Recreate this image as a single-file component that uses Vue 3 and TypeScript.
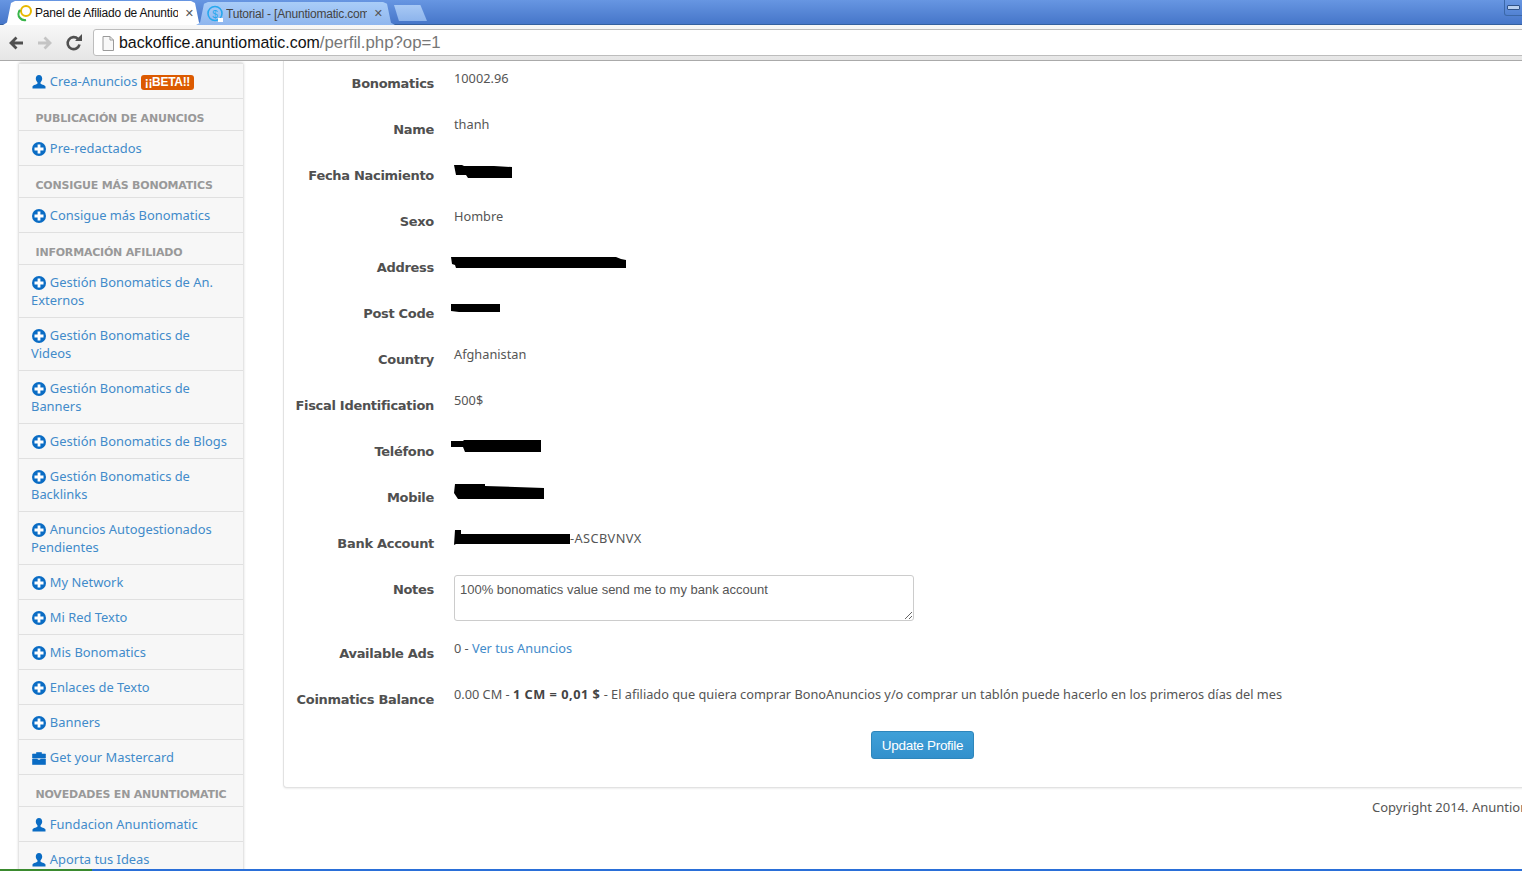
<script setup lang="ts">
type Item = { kind: 'head' | 'link' | 'user' | 'case'; text: string; badge?: boolean };
const items: Item[] = [
  { kind: 'user', text: 'Crea-Anuncios', badge: true },
  { kind: 'head', text: 'Publicación de anuncios' },
  { kind: 'link', text: 'Pre-redactados' },
  { kind: 'head', text: 'Consigue más Bonomatics' },
  { kind: 'link', text: 'Consigue más Bonomatics' },
  { kind: 'head', text: 'Información afiliado' },
  { kind: 'link', text: 'Gestión Bonomatics de An. Externos' },
  { kind: 'link', text: 'Gestión Bonomatics de Videos' },
  { kind: 'link', text: 'Gestión Bonomatics de Banners' },
  { kind: 'link', text: 'Gestión Bonomatics de Blogs' },
  { kind: 'link', text: 'Gestión Bonomatics de Backlinks' },
  { kind: 'link', text: 'Anuncios Autogestionados Pendientes' },
  { kind: 'link', text: 'My Network' },
  { kind: 'link', text: 'Mi Red Texto' },
  { kind: 'link', text: 'Mis Bonomatics' },
  { kind: 'link', text: 'Enlaces de Texto' },
  { kind: 'link', text: 'Banners' },
  { kind: 'case', text: 'Get your Mastercard' },
  { kind: 'head', text: 'Novedades en Anuntiomatic' },
  { kind: 'user', text: 'Fundacion Anuntiomatic' },
  { kind: 'user', text: 'Aporta tus Ideas' },
];
type Blot = { w: number; h: number; d: string; shift: number; top: number };
type Row = { label: string; value?: string; blot?: Blot; after?: string };
const rows: Row[] = [
  { label: 'Bonomatics', value: '10002.96' },
  { label: 'Name', value: 'thanh' },
  { label: 'Fecha Nacimiento', blot: { w: 58, h: 13, shift: 0, top: 5, d: 'M0 0h8l2 1 30 0 18 1v11H14l-2-3H2z' } },
  { label: 'Sexo', value: 'Hombre' },
  { label: 'Address', blot: { w: 175, h: 13, shift: -3, top: 5, d: 'M0 0h165l5 2 5 1v8H5l-1-3-3-1z' } },
  { label: 'Post Code', blot: { w: 49, h: 9, shift: -3, top: 6, d: 'M0 0h49v8H8l-8-1z' } },
  { label: 'Country', value: 'Afghanistan' },
  { label: 'Fiscal Identification', value: '500$' },
  { label: 'Teléfono', blot: { w: 90, h: 12, shift: -3, top: 4, d: 'M0 1h12l1-1h77v12H14l-2-5H0z' } },
  { label: 'Mobile', blot: { w: 90, h: 15, shift: 0, top: 2, d: 'M1 0h30v2l59 2v11H4l-4-6z' } },
  { label: 'Bank Account', blot: { w: 116, h: 15, shift: 0, top: 2, d: 'M1 0h6v4h109v10H2l-2 1z' }, after: '-ASCBVNVX' },
];
</script>

<template>
  <div class="screen">
    <header class="tabstrip">
      <div class="tab active">
        <svg class="favicon" viewBox="0 0 18 18" width="18" height="18">
          <circle cx="11" cy="7" r="5" fill="none" stroke="#e8b800" stroke-width="2" />
          <path d="M5 6a6 6 0 0 0 0 8 6 6 0 0 0 6 2" fill="none" stroke="#39b54a" stroke-width="2.2" />
        </svg>
        <span class="tab-title">Panel de Afiliado de Anuntiomatic</span>
        <span class="tab-x">✕</span>
      </div>
      <div class="tab other">
        <svg class="favicon" viewBox="0 0 18 18" width="18" height="18">
          <circle cx="9" cy="8.500" r="7" fill="none" stroke="#27a8ee" stroke-width="1.600" />
          <text x="9" y="12.500" text-anchor="middle" font-size="10" fill="#27a8ee" font-family="Liberation Sans, sans-serif">$</text>
          <rect x="12" y="13" width="5" height="4" fill="#fff" />
        </svg>
        <span class="tab-title">Tutorial - [Anuntiomatic.com]</span>
        <span class="tab-x">✕</span>
      </div>
      <div class="tab newtab"></div>
      <div class="minimize"><i></i></div>
    </header>

    <div class="toolbar">
      <svg class="nav" viewBox="0 0 18 18" width="18" height="18">
        <path d="M16 9H5M9.500 3.500 4 9l5.500 5.500" fill="none" stroke="#505050" stroke-width="2.800" />
      </svg>
      <svg class="nav" viewBox="0 0 18 18" width="18" height="18">
        <path d="M2 9h11M8.500 3.500 14 9l-5.500 5.500" fill="none" stroke="#c4c4c4" stroke-width="2.800" />
      </svg>
      <svg class="nav reload" viewBox="0 0 18 18" width="18" height="18">
        <path d="M14.500 10.500A6 6 0 1 1 13 5" fill="none" stroke="#505050" stroke-width="2.600" />
        <path d="M10 7h7V0z" fill="#505050" />
      </svg>
      <div class="omnibox">
        <svg viewBox="0 0 12 15" width="12" height="15" class="page-ico">
          <path d="M1 .5h7l3.500 3.500v10.500H1zM8 .5V4h3.500" fill="#f8f8f8" stroke="#9a9a9a" />
        </svg>
        <span class="url"><b>backoffice.anuntiomatic.com</b>/perfil.php?op=1</span>
      </div>
    </div>

    <div class="page">
      <aside class="sidebar">
        <template v-for="item in items" :key="item.kind + item.text">
          <div v-if="item.kind === 'head'" class="head">{{ item.text }}</div>
          <a v-else class="link">
            <svg v-if="item.kind === 'link'" class="ico" viewBox="0 0 14 14" width="14" height="14">
              <circle cx="7" cy="7" r="7" fill="#0a6cc4" />
              <path d="M7 2.500v9M2.500 7h9" stroke="#fff" stroke-width="2.800" />
            </svg>
            <svg v-else-if="item.kind === 'user'" class="ico" viewBox="0 0 14 14" width="14" height="14">
              <path d="M7 0c2 0 3.200 1.500 3.200 3.600 0 1.800-.8 3-1.700 3.800v1c0 .8 4.500 1.400 5 3.100V13.500H.5V11.500c.5-1.700 5-2.300 5-3.100v-1C4.600 6.600 3.800 5.400 3.800 3.600 3.800 1.500 5 0 7 0z" fill="#0a6cc4" />
            </svg>
            <svg v-else class="ico" viewBox="0 0 14 14" width="14" height="14">
              <path d="M4.500 3V1.500h5V3M.5 3h13v4h-13zM.5 8h5v1h3V8h5v5.500H.5z" fill="#0a6cc4" stroke="#0a6cc4" stroke-width=".6" />
            </svg>
            {{ item.text }}
            <span v-if="item.badge" class="badge">¡¡BETA!!</span>
          </a>
        </template>
      </aside>

      <main class="main">
        <section class="card">
          <div v-for="row in rows" :key="row.label" class="row">
            <label class="lbl">{{ row.label }}</label>
            <div class="val">
              <svg v-if="row.blot" class="blot" :width="row.blot.w" :height="row.blot.h" :viewBox="`0 0 ${row.blot.w} ${row.blot.h}`" :style="{ marginLeft: row.blot.shift + 'px', marginTop: row.blot.top + 'px' }">
                <path :d="row.blot.d" fill="#000" />
              </svg>
              <template v-else>{{ row.value }}</template><span v-if="row.after" class="after">{{ row.after }}</span>
            </div>
          </div>
          <div class="row notes">
            <label class="lbl">Notes</label>
            <textarea class="area" readonly>100% bonomatics value send me to my bank account</textarea>
          </div>
          <div class="row">
            <label class="lbl">Available Ads</label>
            <div class="val">0 - <a class="plain">Ver tus Anuncios</a></div>
          </div>
          <div class="row">
            <label class="lbl">Coinmatics Balance</label>
            <div class="val nowrap">0.00 CM - <b>1 CM = 0,01 $</b> - El afiliado que quiera comprar BonoAnuncios y/o comprar un tablón puede hacerlo en los primeros días del mes</div>
          </div>
          <div class="actions"><button class="btn" type="button">Update Profile</button></div>
        </section>
        <footer class="copy">Copyright 2014. Anuntiomatic.com</footer>
      </main>
    </div>
    <div class="taskbar"><i></i></div>
  </div>
</template>

<style>
html, body { margin: 0; background: #fff; overflow: hidden; }
</style>

<style scoped>
.screen {
  width: 1522px; height: 871px; overflow: hidden;
  display: flex; flex-direction: column;
  font-family: "Noto Sans", "Open Sans", sans-serif; font-size: 13px; color: #555;
}
.tabstrip {
  height: 25px; flex: none; display: flex; align-items: flex-end; padding-left: 3px;
  background: linear-gradient(#6796e2, #4676c9); border-bottom: 1px solid #34609f; box-sizing: border-box;
  position: relative;
}
.tab {
  height: 24px; display: flex; align-items: center; box-sizing: border-box;
  clip-path: polygon(0 100%, 4px 90%, 8px 8%, 12px 0, calc(100% - 12px) 0, calc(100% - 8px) 8%, calc(100% - 4px) 90%, 100% 100%);
  font-family: "Liberation Sans", sans-serif; font-size: 12px; margin-bottom: -1px;
}
.active { width: 200px; background: #fff; color: #111; padding: 0 9px 0 12px; }
.other { width: 199px; margin-left: -7px; background: linear-gradient(#a9cdf8, #8fb6ee); color: #444; padding: 0 12px 0 10px; height: 23px; }
.newtab { width: 33px; height: 16px; margin-left: -1px; margin-bottom: 3px; background: linear-gradient(#a8c9f5, #8db4ec); clip-path: polygon(0 0, 80% 0, 100% 100%, 15% 100%); }
.tab-title { flex: 1; min-width: 0; margin-left: 2px; white-space: nowrap; overflow: hidden; letter-spacing: -.2px; }
.tab-x { flex: none; margin-left: 7px; font-size: 11px; font-weight: 700; color: #555; font-family: "DejaVu Sans", sans-serif; }
.favicon { flex: none; }
.minimize {
  position: absolute; right: -1px; top: 0; width: 19px; height: 16px; box-sizing: border-box;
  border: 1px solid #3b68a8; border-top: 0; border-radius: 0 0 0 3px; display: flex; align-items: center; justify-content: center;
}
.minimize i { width: 11px; height: 3px; background: #b9d0f0; border: 1px solid #2f5288; border-radius: 1px; }
.toolbar {
  height: 36px; flex: none; box-sizing: border-box; display: flex; align-items: center; gap: 11px; padding: 0 0 0 7px;
  background: linear-gradient(#f7f7f7, #e6e6e6); border-bottom: 1px solid #aaa;
}
.omnibox {
  flex: 1; height: 27px; margin-right: -4px; margin-left: -1px; display: flex; align-items: center; gap: 5px; padding: 1px 0 0 8px; box-sizing: border-box;
  background: #fff; border: 1px solid #bdbdbd; border-radius: 3px; font-family: "Liberation Sans", sans-serif; font-size: 16.800px; color: #777;
}
.url b { font-weight: 400; color: #111; font-size: 15.950px; }
.page-ico { flex: none; }
.page { flex: 1; min-height: 0; display: flex; align-items: flex-start; overflow: hidden; }
.sidebar {
  flex: none; width: 224px; margin: 2px 40px 0 19px; box-sizing: border-box; background: #f7f7f7;
  border-top: 1px solid #e2e2e2; box-shadow: 0 0 3px #bbb;
}
.head {
  height: 32px; box-sizing: border-box; padding: 12px 0 0 16.500px; line-height: 16px; border-bottom: 1px solid #e0e0e0;
  font-family: "DejaVu Sans", sans-serif; font-weight: 700; font-size: 11px; text-transform: uppercase; color: #999; white-space: nowrap; letter-spacing: -.2px;
}
.link {
  display: block; box-sizing: border-box; padding: 8px 12px; line-height: 18px; color: #428bca; border-bottom: 1px solid #e0e0e0; font-size: 12.900px;
}
.ico { vertical-align: -3px; margin: 0 .5px 0 1px; }
.badge {
  display: inline-block; background: #dc5a00; color: #fff; font-family: "Liberation Sans", sans-serif; font-weight: 700; font-size: 12px; line-height: 15px; margin-top: 3px; padding: 0 4px; border-radius: 3px; vertical-align: top; letter-spacing: -.3px;
}
.main { flex: none; width: 1300px; }
.card {
  background: #fff; border: 1px solid #e2e2e2; border-top: 0; border-radius: 0 0 4px 4px; height: 727px; box-sizing: border-box; box-shadow: 0 1px 2px #eee;
}
.row { display: grid; grid-template-columns: 150px 1fr; column-gap: 20px; height: 46px; }
.notes { height: 64px; }
.lbl { padding: 13px 0 0 0; line-height: 20px; text-align: right; font-family: "DejaVu Sans", sans-serif; font-weight: 700; font-size: 13px; color: #505050; white-space: nowrap; letter-spacing: -.3px; }
.val { padding-top: 7px; line-height: 20px; font-size: 12.750px; color: #555; display: flex; align-items: flex-start; white-space: pre; }
.nowrap { display: block; }
.val b { color: #444; letter-spacing: .5px; }
.after { letter-spacing: .4px; }
.blot { display: block; flex: none; }
.plain { color: #428bca; }
.area {
  width: 460px; height: 46px; margin-top: 8px; box-sizing: border-box; border: 1px solid #ccc; border-radius: 3px; padding: 5px; font: 13px/18px "Liberation Sans", sans-serif; color: #555; resize: both; outline: none;
}
.actions { display: flex; padding: 8px 0 0 587px; }
.btn {
  width: 103px; height: 28px; padding: 0; border: 1px solid #2e86bb; border-radius: 3px; background: linear-gradient(#3fa0d8, #3390cc); color: #fff; font: 13.500px "Liberation Sans", sans-serif; letter-spacing: -.3px;
}
.copy { padding: 10px 0 0 1089px; line-height: 18px; white-space: nowrap; }
.taskbar { height: 2px; flex: none; background: #2a6fd8; }
.taskbar i { display: block; width: 92px; height: 2px; background: #3a8a2e; }
</style>
